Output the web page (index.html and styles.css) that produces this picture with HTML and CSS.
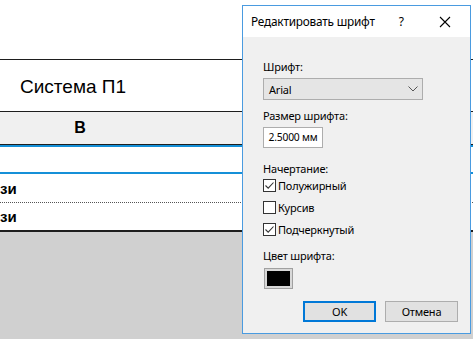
FILE: index.html
```html
<!DOCTYPE html>
<html lang="ru">
<head>
<meta charset="utf-8">
<link rel="stylesheet" href="styles.css">
</head>
<body>
<div class="page">
  <div class="top-space"></div>
  <div class="sheet">
    <div class="row-title">Система П1</div>
    <div class="row-head"><div class="head-cell">В</div></div>
    <div class="row-empty"></div>
    <div class="row-data dotted">зи</div>
    <div class="row-data last">зи</div>
  </div>
  <div class="rest"></div>

  <div class="dialog">
    <div class="titlebar">
      <span class="title">Редактировать шрифт</span>
      <span class="help">?</span>
      <svg class="close" width="12" height="12" viewBox="0 0 12 12"><path d="M1 1 L11 11 M11 1 L1 11" stroke="#000" stroke-width="1.1" fill="none"/></svg>
    </div>
    <div class="body">
      <div class="label l-font">Шрифт:</div>
      <div class="combo">
        <span>Arial</span>
        <svg width="10" height="6" viewBox="0 0 10 6"><path d="M0.5 0.5 L5 5 L9.5 0.5" stroke="#555" stroke-width="1" fill="none"/></svg>
      </div>
      <div class="label l-size">Размер шрифта:</div>
      <div class="input">2.5000 мм</div>
      <div class="label l-style">Начертание:</div>
      <div class="check first"><span class="box"><svg width="11" height="11" viewBox="0 0 11 11"><path d="M1.5 5.5 L4.2 8.2 L9.5 2.5" stroke="#333" stroke-width="1.1" fill="none"/></svg></span>Полужирный</div>
      <div class="check"><span class="box"></span>Курсив</div>
      <div class="check"><span class="box"><svg width="11" height="11" viewBox="0 0 11 11"><path d="M1.5 5.5 L4.2 8.2 L9.5 2.5" stroke="#333" stroke-width="1.1" fill="none"/></svg></span>Подчеркнутый</div>
      <div class="label l-color">Цвет шрифта:</div>
      <div class="swatch"><div class="swatch-inner"></div></div>
      <div class="buttons">
        <div class="btn default">OK</div>
        <div class="btn">Отмена</div>
      </div>
    </div>
  </div>
</div>
</body>
</html>
```
FILE: styles.css
```css
* { box-sizing: border-box; }
html, body { margin: 0; padding: 0; }
body { width: 473px; height: 339px; overflow: hidden; background: #d0d0d0; }
.page { position: relative; width: 473px; height: 339px; font-family: "Liberation Sans", Arial, sans-serif; color: #000; }
.top-space { height: 59px; background: #fff; }
.sheet { background: #fff; border-top: 1px solid #1e1e1e; }
.row-title { height: 52px; border-bottom: 1px solid #1e1e1e; font-size: 19px; padding-left: 20px; display: flex; align-items: center; padding-top: 2px; }
.row-head { height: 33px; background: #f0f0f0; border-bottom: 1px solid #1e1e1e; display: flex; align-items: center; }
.head-cell { width: 160px; text-align: center; font-weight: bold; font-size: 16px; }
.row-empty { height: 29px; border-top: 2px solid #1590d8; border-bottom: 2px solid #1590d8; background: #fff; }
.row-data { height: 28px; font-weight: bold; font-size: 15px; display: flex; align-items: center; }
.row-data.dotted { height: 29px; border-bottom: 1px dotted #555; }
.row-data.last { height: 29px; border-bottom: 2px solid #1e1e1e; }
.rest { flex: 1; }

.dialog { position: absolute; left: 242px; top: 5px; width: 229px; height: 329px; border: 1px solid #4a9be0; background: #f0f0f0; font-family: "Noto Sans", "Open Sans", sans-serif; font-size: 11px; line-height: 15px; letter-spacing: -0.2px; }
.titlebar { height: 31px; background: #fff; display: flex; align-items: center; padding-left: 8px; }
.title { font-size: 11.8px; }
.help { margin-left: 24px; font-size: 12px; }
.close { margin-left: 35px; }
.body { padding: 22px 0 0 20px; display: flex; flex-direction: column; align-items: flex-start; }
.label { height: 15px; }
.combo { margin-top: 4px; width: 160px; height: 22px; background: #e5e5e5; border: 1px solid #adadad; display: flex; align-items: center; justify-content: space-between; padding: 0 4px 0 5px; }
.l-size { margin-top: 8px; }
.input { margin-top: 4px; width: 60px; height: 21px; background: #fff; border: 1px solid #adadad; display: flex; align-items: center; justify-content: center; font-size: 10.3px; }
.l-style { margin-top: 13px; }
.check { display: flex; align-items: center; height: 22px; }
.check.first { margin-top: -2px; }
.box { width: 13px; height: 13px; border: 1px solid #333; background: #fff; margin-right: 2px; display: flex; align-items: center; justify-content: center; }
.l-color { margin-top: 8px; }
.swatch { margin-top: 5px; margin-left: 1px; width: 29px; height: 21px; border: 1px solid #a0a0a0; background: #d8d8d8; padding: 2px; }
.swatch-inner { width: 100%; height: 100%; background: #000; }
.buttons { margin-top: 12px; margin-left: 40px; display: flex; gap: 9px; }
.btn { width: 73px; height: 21px; background: #e1e1e1; border: 1px solid #adadad; display: flex; align-items: center; justify-content: center; }
.btn.default { border: 2px solid #0078d7; }
```
